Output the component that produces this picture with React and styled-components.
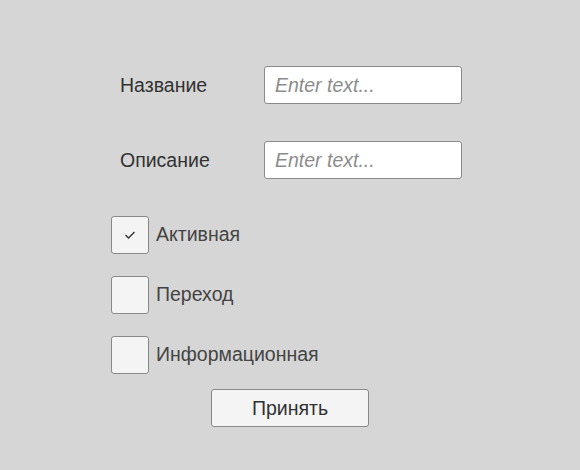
import styled, { createGlobalStyle } from 'styled-components';

const GlobalStyle = createGlobalStyle`
  html, body {
    margin: 0;
    padding: 0;
    background: #d6d6d6;
  }
  body {
    font-family: "Liberation Sans", Arial, sans-serif;
  }
`;

const Page = styled.div`
  width: 580px;
  height: 470px;
  box-sizing: border-box;
  padding-top: 66px;
  display: flex;
  flex-direction: column;
`;

const Field = styled.div`
  display: flex;
  align-items: center;
  height: 38px;
  padding-left: 120px;
  margin-bottom: ${(p) => p.gap}px;
`;

const Label = styled.label`
  width: 144px;
  font-size: 19.5px;
  color: #323232;
`;

const Input = styled.input`
  width: 198px;
  height: 38px;
  box-sizing: border-box;
  border: 1px solid #8a8a8a;
  border-radius: 3px;
  background: #ffffff;
  padding: 0 10px;
  font-family: inherit;
  font-size: 19.5px;
  color: #323232;
  outline: none;

  &::placeholder {
    color: #8c8c8c;
    font-style: italic;
  }
`;

const CheckRow = styled.div`
  display: flex;
  align-items: center;
  gap: 7px;
  padding-left: 111px;
  margin-bottom: ${(p) => p.gap}px;
`;

const Box = styled.div`
  width: 38px;
  height: 38px;
  box-sizing: border-box;
  border: 1px solid #8a8a8a;
  border-radius: 3px;
  background: #f4f4f4;
  display: flex;
  align-items: center;
  justify-content: center;
`;

const CheckText = styled.span`
  font-size: 19.5px;
  color: #444444;
  margin-top: -1px;
`;

const Button = styled.button`
  align-self: center;
  width: 158px;
  height: 38px;
  box-sizing: border-box;
  border: 1px solid #8a8a8a;
  border-radius: 3px;
  background: #f4f4f4;
  font-family: inherit;
  font-size: 19.5px;
  color: #323232;
  padding: 0;
`;

const Check = () => (
  <svg width="14" height="14" viewBox="0 0 14 14">
    <path d="M2.5 7 L5.5 10 L11.5 4" fill="none" stroke="#333" strokeWidth="1.4" />
  </svg>
);

const options = [
  { text: 'Активная', checked: true, gap: 22 },
  { text: 'Переход', checked: false, gap: 22 },
  { text: 'Информационная', checked: false, gap: 15 },
];

export default function App() {
  return (
    <Page>
      <GlobalStyle />
      <Field gap={37}>
        <Label>Название</Label>
        <Input placeholder="Enter text..." />
      </Field>
      <Field gap={37}>
        <Label>Описание</Label>
        <Input placeholder="Enter text..." />
      </Field>
      {options.map((o) => (
        <CheckRow key={o.text} gap={o.gap}>
          <Box>{o.checked && <Check />}</Box>
          <CheckText>{o.text}</CheckText>
        </CheckRow>
      ))}
      <Button>Принять</Button>
    </Page>
  );
}
